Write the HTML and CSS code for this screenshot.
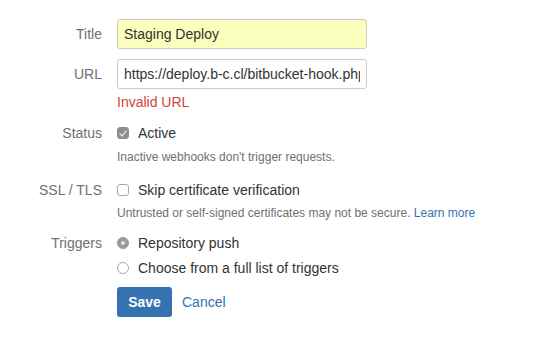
FILE: index.html
```html
<!DOCTYPE html>
<html lang="en">

<head>
  <meta charset="UTF-8" />
  <title>Webhook</title>
  <link rel="stylesheet" href="styles.css">
</head>

<body>
  <form class="hook-form">
    <div class="field-group">
      <label class="field-label" for="title">Title</label>
      <div class="field-body">
        <input class="text autofilled" id="title" type="text" value="Staging Deploy" />
      </div>
    </div>

    <div class="field-group url-group">
      <label class="field-label" for="url">URL</label>
      <div class="field-body">
        <input class="text" id="url" type="text" value="https://deploy.b-c.cl/bitbucket-hook.php" />
        <div class="error">Invalid URL</div>
      </div>
    </div>

    <div class="field-group status-group">
      <span class="field-label">Status</span>
      <div class="field-body">
        <label class="check"><span class="box checked"></span>Active</label>
        <div class="description">Inactive webhooks don't trigger requests.</div>
      </div>
    </div>

    <div class="field-group ssl-group">
      <span class="field-label">SSL / TLS</span>
      <div class="field-body">
        <label class="check"><span class="box"></span>Skip certificate verification</label>
        <div class="description">Untrusted or self-signed certificates may not be secure. <a href="#">Learn more</a></div>
      </div>
    </div>

    <div class="field-group triggers-group">
      <span class="field-label">Triggers</span>
      <div class="field-body">
        <label class="check"><span class="radio selected"></span>Repository push</label>
        <label class="check second"><span class="radio"></span>Choose from a full list of triggers</label>
      </div>
    </div>

    <div class="buttons">
      <button class="button primary" type="button">Save</button>
      <a class="cancel" href="#">Cancel</a>
    </div>
  </form>
</body>

</html>
```

FILE: styles.css
```css
* {
  padding: 0;
  margin: 0;
  box-sizing: border-box;
}

body {
  font-family: "Liberation Sans", Arial, sans-serif;
  font-size: 14px;
  line-height: 20px;
  color: #333;
  background: #fff;
}

.hook-form {
  padding-top: 19px;
}

.field-group {
  display: flex;
}

.field-label {
  width: 117px;
  padding-right: 15px;
  text-align: right;
  color: #707070;
  line-height: 30px;
  flex-shrink: 0;
}

.status-group .field-label,
.ssl-group .field-label,
.triggers-group .field-label {
  line-height: 20px;
}

.field-body {
  display: flex;
  flex-direction: column;
}

.text {
  width: 250px;
  height: 30px;
  padding: 0 6px;
  border: 1px solid #ccc;
  border-radius: 3px;
  font-family: inherit;
  font-size: 14px;
  color: #333;
  background: #fff;
  outline: none;
}

.text.autofilled {
  background: #faffbd;
}

.url-group {
  margin-top: 10px;
}

.error {
  margin-top: 3px;
  color: #d04437;
}

.status-group {
  margin-top: 11px;
}

.check {
  display: flex;
  align-items: center;
  color: #333;
}

.check.second {
  margin-top: 5px;
}

.box,
.radio {
  width: 12px;
  height: 12px;
  margin-right: 9px;
  border: 1px solid #aaa;
  background: #fff;
  position: relative;
  flex-shrink: 0;
}

.box {
  border-radius: 3px;
}

.box.checked {
  background: #8e8e8e;
  border-color: #8e8e8e;
}

.box.checked::after {
  content: "";
  position: absolute;
  left: 3px;
  top: 1px;
  width: 3px;
  height: 6px;
  border: solid #fff;
  border-width: 0 1.5px 1.5px 0;
  transform: rotate(40deg);
}

.radio {
  border-radius: 50%;
}

.radio.selected {
  background: #999;
  border-color: #999;
}

.radio.selected::after {
  content: "";
  position: absolute;
  left: 3px;
  top: 3px;
  width: 4px;
  height: 4px;
  border-radius: 50%;
  background: #e6e6e6;
}

.description {
  margin-top: 6px;
  font-size: 12px;
  line-height: 16px;
  color: #707070;
}

.description a {
  color: #3572b0;
  text-decoration: none;
}

.ssl-group {
  margin-top: 15px;
}

.ssl-group .description {
  margin-top: 5px;
}

.triggers-group {
  margin-top: 12px;
}

.buttons {
  display: flex;
  align-items: center;
  margin-top: 9px;
  padding-left: 117px;
}

.button {
  width: 55px;
  height: 30px;
  border: 0;
  border-radius: 3px;
  font-family: inherit;
  font-size: 14px;
  font-weight: bold;
  color: #fff;
  background: #3572b0;
  cursor: pointer;
}

.cancel {
  margin-left: 10px;
  color: #3572b0;
  text-decoration: none;
}
```
